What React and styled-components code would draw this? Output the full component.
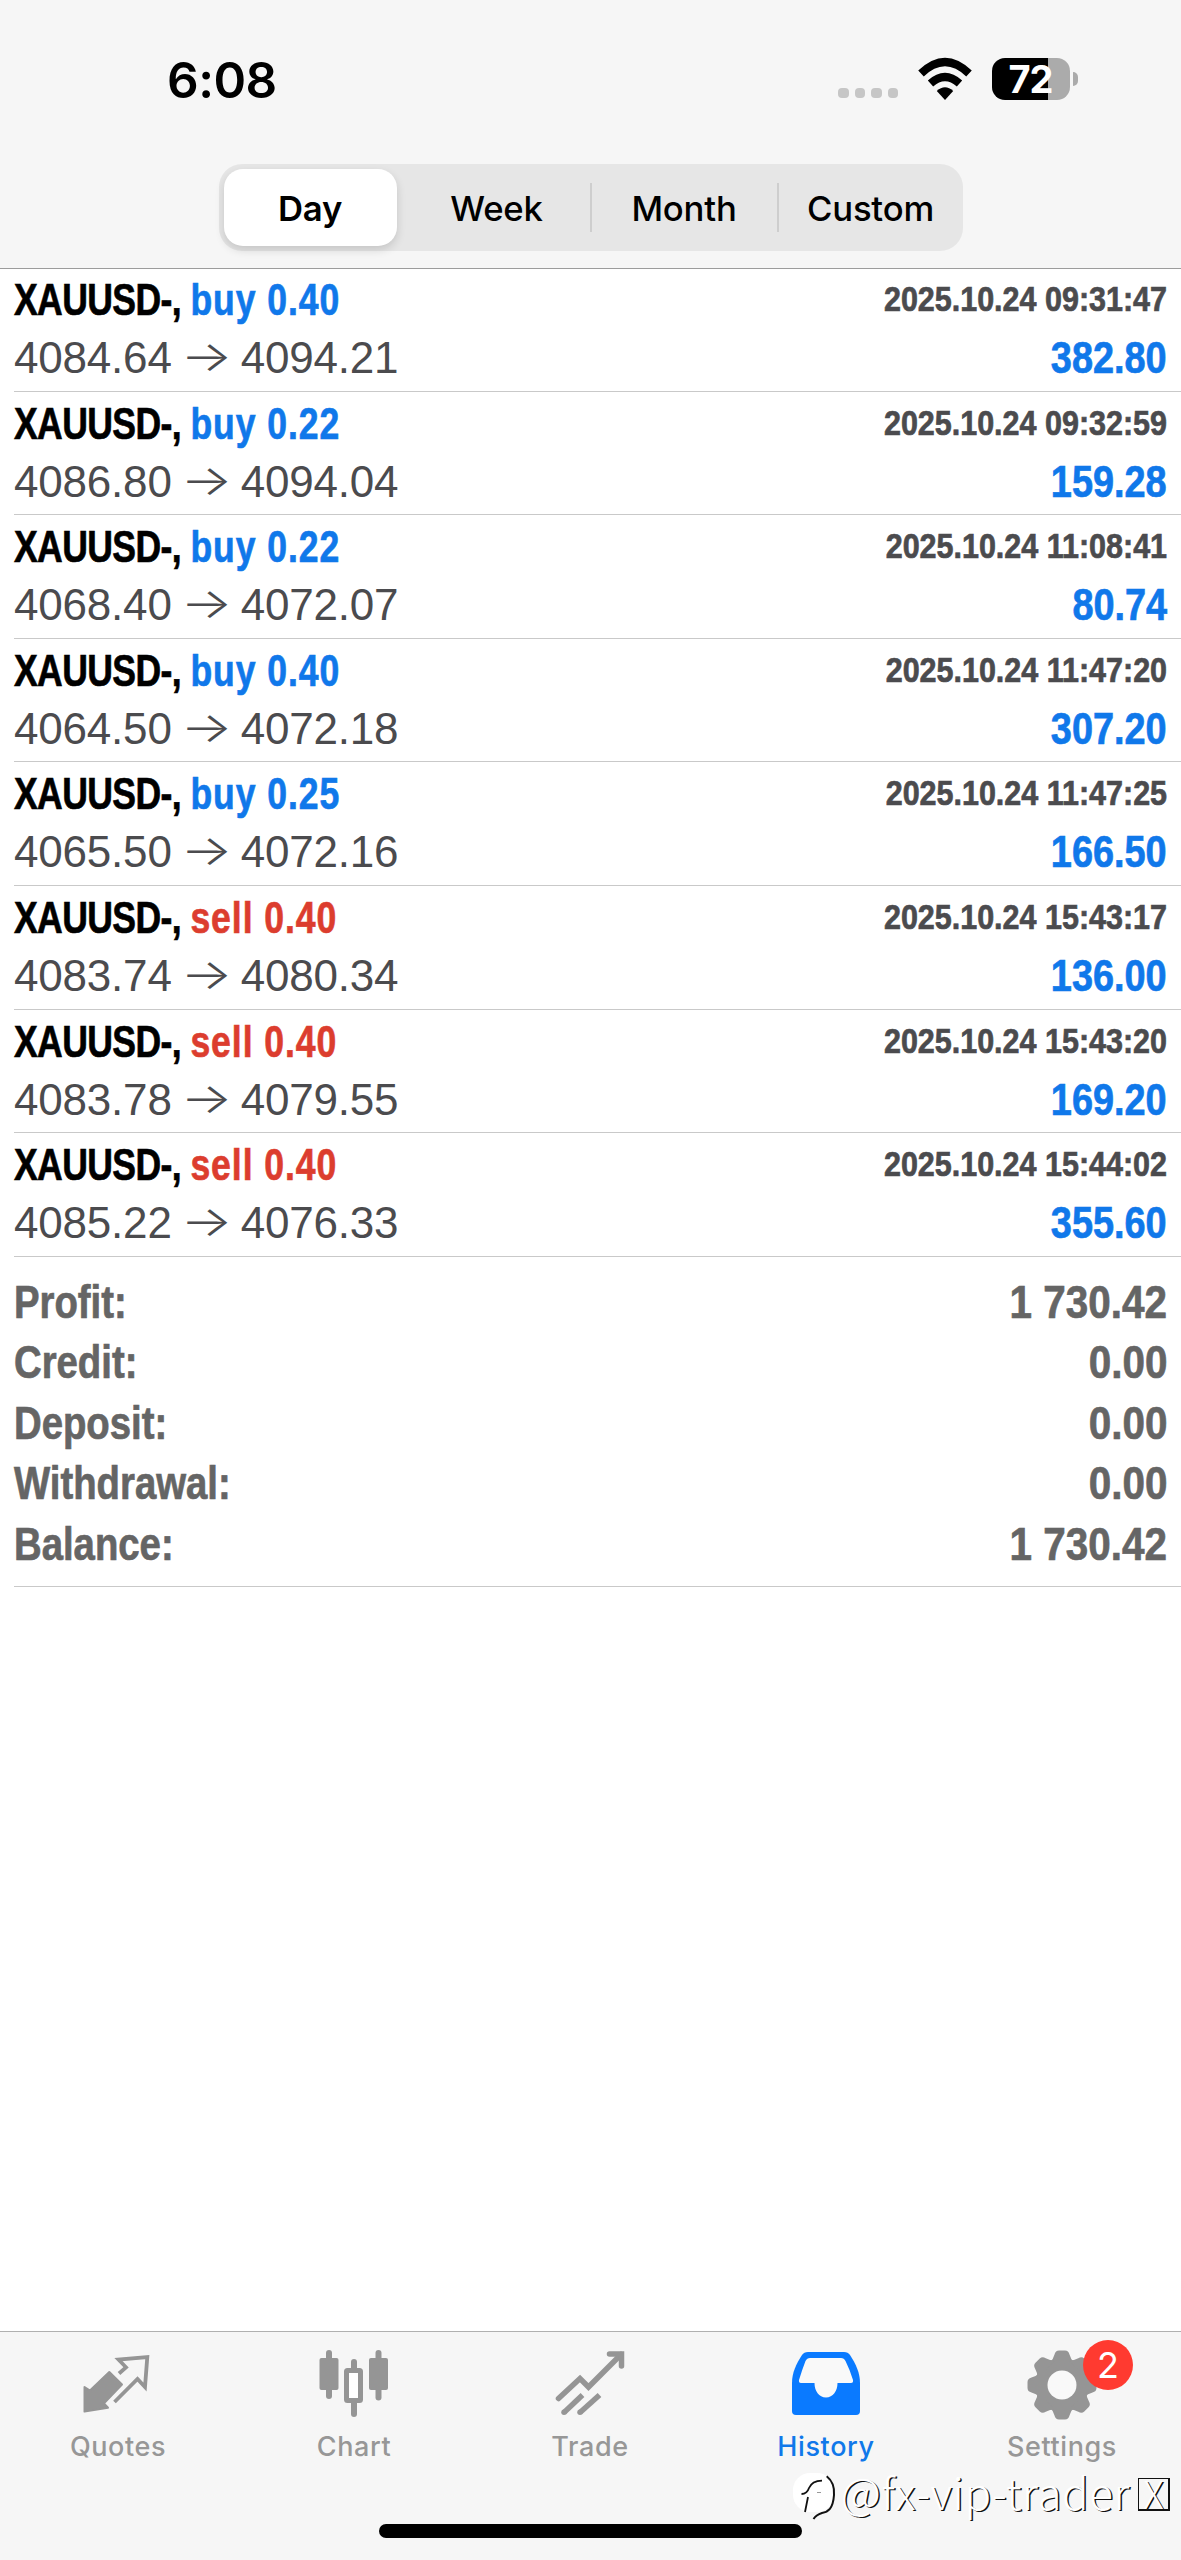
import React from "react";
import styled, { createGlobalStyle } from "styled-components";

const deals = [
  { id: 1, side: "buy", volume: "0.40", open: "4084.64", close: "4094.21", time: "2025.10.24 09:31:47", profit: "382.80" },
  { id: 2, side: "buy", volume: "0.22", open: "4086.80", close: "4094.04", time: "2025.10.24 09:32:59", profit: "159.28" },
  { id: 3, side: "buy", volume: "0.22", open: "4068.40", close: "4072.07", time: "2025.10.24 11:08:41", profit: "80.74" },
  { id: 4, side: "buy", volume: "0.40", open: "4064.50", close: "4072.18", time: "2025.10.24 11:47:20", profit: "307.20" },
  { id: 5, side: "buy", volume: "0.25", open: "4065.50", close: "4072.16", time: "2025.10.24 11:47:25", profit: "166.50" },
  { id: 6, side: "sell", volume: "0.40", open: "4083.74", close: "4080.34", time: "2025.10.24 15:43:17", profit: "136.00" },
  { id: 7, side: "sell", volume: "0.40", open: "4083.78", close: "4079.55", time: "2025.10.24 15:43:20", profit: "169.20" },
  { id: 8, side: "sell", volume: "0.40", open: "4085.22", close: "4076.33", time: "2025.10.24 15:44:02", profit: "355.60" },
];

const totals = [
  { label: "Profit:", value: "1 730.42" },
  { label: "Credit:", value: "0.00" },
  { label: "Deposit:", value: "0.00" },
  { label: "Withdrawal:", value: "0.00" },
  { label: "Balance:", value: "1 730.42" },
];

const QuotesIcon = () => (
  <svg width="70" height="70" viewBox="0 0 70 70">
    <path
      d="M1.500 37 L7 40.500 L26.300 22 L39 34.500 L21 53.300 L25 57.700 L1.500 61.500Z"
      fill="#959595"
      stroke="#959595"
      strokeWidth="2"
      strokeLinejoin="round"
    />
    <path
      d="M36 23.500 L43 17.300 L35.500 9.500 L64.300 7 L62 37 L54.500 29 L31.500 52"
      fill="none"
      stroke="#959595"
      strokeWidth="3.800"
    />
  </svg>
);

const ChartIcon = () => (
  <svg width="70" height="70" viewBox="0 0 70 70" fill="#959595">
    <rect x="7" y="0" width="6" height="49" rx="3" />
    <rect x="0.500" y="8" width="19" height="32" rx="2" />
    <rect x="56.500" y="0" width="6" height="50.500" rx="3" />
    <rect x="50" y="8" width="19" height="32" rx="2" />
    <rect x="32" y="9" width="6" height="15" rx="3" />
    <rect x="32" y="47" width="6" height="20" rx="3" />
    <rect x="27.500" y="20.500" width="14" height="30" rx="1" fill="#fff" stroke="#959595" strokeWidth="5" />
  </svg>
);

const TradeIcon = () => (
  <svg width="70" height="70" viewBox="0 0 70 70" fill="none" stroke="#959595" strokeWidth="5.500">
    <path d="M3.500 48.500 L25 28.500 L33.500 37 L66 4.500" strokeLinecap="round" />
    <path d="M54.500 4 H66.500 V16" strokeLinecap="round" />
    <path d="M9 62.500 L27.500 45" />
    <path d="M25 62.500 L44.500 45" />
    <circle cx="9" cy="62.300" r="2.750" fill="#959595" stroke="none" />
    <circle cx="25" cy="62.300" r="2.750" fill="#959595" stroke="none" />
  </svg>
);

const HistoryIcon = () => (
  <svg width="70" height="70" viewBox="0 0 70 70">
    <path
      d="M17 2 H53 Q57 2 59 5 C65 14 69 23 69 33 V61 Q69 65 65 65 H5 Q1 65 1 61 V33 C1 23 5 14 11 5 Q13 2 17 2Z"
      fill="#0a7aff"
    />
    <path
      d="M19 8 H50 Q53 8 54.500 11 Q59 20 62 30 Q62.500 33 60 33 H46.500 C46.500 41 42 47.500 35 47.500 C28 47.500 23.500 41 23.500 33 H10 Q7.500 33 8 30 Q11 20 14.500 11 Q16 8 19 8Z"
      fill="#f9f9f9"
    />
  </svg>
);

const SettingsIcon = () => (
  <svg width="70" height="70" viewBox="-35 -35 70 70" fill="#959595">
    <circle r="26.500" />
    {[0, 45, 90, 135, 180, 225, 270, 315].map((angle) => (
      <path
        key={angle}
        d="M-12.500 -22 Q-8.500 -26 -7.500 -30.500 Q-6.500 -34.500 -3 -34.500 H3 Q6.500 -34.500 7.500 -30.500 Q8.500 -26 12.500 -22Z"
        transform={`rotate(${angle})`}
      />
    ))}
    <circle r="14.500" fill="#f9f9f9" />
  </svg>
);

const tabs = [
  { name: "Quotes", icon: <QuotesIcon /> },
  { name: "Chart", icon: <ChartIcon /> },
  { name: "Trade", icon: <TradeIcon /> },
  { name: "History", icon: <HistoryIcon />, active: true },
  { name: "Settings", icon: <SettingsIcon />, badge: 2 },
];

function App() {
  return (
    <Screen>
      <GlobalStyle />
      <Header>
        <StatusBar>
          <Clock>6:08</Clock>
          <StatusIcons>
            <SignalDots>
              <span />
              <span />
              <span />
              <span />
            </SignalDots>
            <svg width="54" height="46" viewBox="0 0 54 46">
              <path d="M27 45 L18.800 36 Q27 28.500 35.200 36Z" />
              <path d="M12.500 28.500 Q27 15.500 41.500 28.500" fill="none" stroke="#000" strokeWidth="8" />
              <path d="M3 18.500 Q27 -4.500 51 18.500" fill="none" stroke="#000" strokeWidth="8" />
            </svg>
            <Battery>
              <BatteryLevel>72</BatteryLevel>
            </Battery>
            <BatteryTip />
          </StatusIcons>
        </StatusBar>
        <Segmented>
          <Segment $selected>Day</Segment>
          <Segment>Week</Segment>
          <Segment $divider>Month</Segment>
          <Segment $divider>Custom</Segment>
        </Segmented>
      </Header>

      <DealList>
        {deals.map((deal) => (
          <Deal key={deal.id}>
            <DealLine>
              <Symbol>
                XAUUSD-, <Side $side={deal.side}>{deal.side} {deal.volume}</Side>
              </Symbol>
              <Time>{deal.time}</Time>
            </DealLine>
            <DealLine>
              <Prices>
                {deal.open}
                <Arrow>→</Arrow>
                {deal.close}
              </Prices>
              <Profit>{deal.profit}</Profit>
            </DealLine>
          </Deal>
        ))}
      </DealList>

      <Totals>
        {totals.map((item) => (
          <TotalRow key={item.label}>
            <TotalLabel>{item.label}</TotalLabel>
            <TotalValue>{item.value}</TotalValue>
          </TotalRow>
        ))}
      </Totals>

      <TabBar>
        <Tabs>
          {tabs.map((tab) => (
            <Tab key={tab.name} $active={tab.active}>
              <TabIcon>
                {tab.icon}
                {tab.badge && <Badge>{tab.badge}</Badge>}
              </TabIcon>
              {tab.name}
            </Tab>
          ))}
        </Tabs>
        <HomeIndicator />
        <Watermark>
          <svg width="46" height="52" viewBox="0 0 46 52" fill="none">
            <rect x="0" y="5" width="41" height="39" rx="17" fill="#fff" />
            <path d="M12 44 L15 29 M8.500 26 Q14 26 16 20 Q19 13 29 12.700" stroke="#111" strokeWidth="1.800" />
            <path d="M24 24.500 H28" stroke="#999" strokeWidth="1" />
            <path d="M33.700 8.300 Q42 15 41 27 C40 41 35 44 29 45 Q23 47 20.500 51" stroke="#111" strokeWidth="2" />
          </svg>
          <Handle>@fx-vip-trader</Handle>
          <MissingGlyph>X</MissingGlyph>
        </Watermark>
      </TabBar>
    </Screen>
  );
}

export default App;

const GlobalStyle = createGlobalStyle`
  * {
    box-sizing: border-box;
  }
  body {
    margin: 0;
    background: #fff;
  }
`;

const Screen = styled.div`
  width: 1181px;
  height: 2560px;
  display: flex;
  flex-direction: column;
  background: #fff;
  font-family: Inter, sans-serif;
  overflow: hidden;
`;
const Header = styled.header`
  height: 269px;
  flex-shrink: 0;
  background: #f6f6f6;
  border-bottom: 1px solid #9c9c9c;
`;
const StatusBar = styled.div`
  height: 164px;
  padding: 55px 103px 0 167px;
  display: flex;
  justify-content: space-between;
  align-items: flex-start;
`;
const Clock = styled.div`
  font-size: 49.500px;
  line-height: 51px;
  font-weight: 600;
  letter-spacing: -0.500px;
`;
const StatusIcons = styled.div`
  display: flex;
  align-items: flex-start;
  height: 50px;
`;
const SignalDots = styled.div`
  display: flex;
  gap: 6px;
  margin: 33px 20px 0 0;

  span {
    width: 10.500px;
    height: 10px;
    border-radius: 4px;
    background: #c6c6c6;
  }
`;
const Battery = styled.div`
  width: 78px;
  height: 42px;
  margin: 3px 0 0 20px;
  border-radius: 13px;
  background: linear-gradient(to right, #000 56px, #ababab 56px);
`;
const BatteryLevel = styled.div`
  width: 77px;
  text-align: center;
  color: #fff;
  font-size: 38px;
  line-height: 42px;
  font-weight: 700;
  letter-spacing: -1px;
`;
const BatteryTip = styled.div`
  width: 5px;
  height: 14px;
  margin: 17px 0 0 3px;
  border-radius: 0 5px 5px 0;
  background: #ababab;
`;
const Segmented = styled.div`
  width: 744px;
  height: 87px;
  margin: 0 auto;
  padding: 5px 0 5px 5px;
  display: grid;
  grid-template-columns: 180px 186px 187px 186px;
  align-items: center;
  border-radius: 23px;
  background: #e6e6e6;
`;
const Segment = styled.div`
  height: ${(props) => (props.$selected ? "77px" : "49px")};
  margin-right: ${(props) => (props.$selected ? "7px" : "0")};
  line-height: ${(props) => (props.$selected ? "79px" : "51px")};
  text-align: center;
  font-size: 34.700px;
  font-weight: ${(props) => (props.$selected ? 600 : 500)};
  letter-spacing: -0.200px;
  border-radius: ${(props) => (props.$selected ? "19px" : "0")};
  background: ${(props) => (props.$selected ? "#fff" : "none")};
  box-shadow: ${(props) => (props.$selected ? "0 4px 10px rgba(0, 0, 0, 0.14)" : "none")};
  border-left: ${(props) => (props.$divider ? "2px solid #cecece" : "none")};
`;
const DealList = styled.div`
  margin-top: -0.900px;
  padding-left: 14px;
`;
const Deal = styled.div`
  height: 123.600px;
  padding: 3px 14px 0 0;
  border-bottom: 1.500px solid #c9c9c9;
`;
const DealLine = styled.div`
  height: 58px;
  display: flex;
  justify-content: space-between;
  align-items: center;
`;
/* bold sans squeezed horizontally into a condensed face */
const Condensed = styled.div`
  font-family: "Liberation Sans", sans-serif;
  font-weight: 700;
  white-space: pre;
  -webkit-text-stroke: 0.700px currentColor;
  transform: scaleX(${(props) => props.$squeeze});
  transform-origin: ${(props) => props.$origin || "left"} center;
`;
const Symbol = styled(Condensed).attrs({ $squeeze: 0.79 })`
  font-size: 45px;
  letter-spacing: -0.750px;
`;
const Side = styled.span`
  color: ${(props) => (props.$side === "buy" ? "#1078ea" : "#dc3d2e")};
  letter-spacing: 1.200px;
`;
const Time = styled(Condensed).attrs({ $squeeze: 0.871, $origin: "right" })`
  margin-top: -2px;
  font-size: 35px;
  color: #4b4b4e;
`;
const Prices = styled.div`
  display: flex;
  align-items: center;
  font-family: "Liberation Sans", sans-serif;
  font-size: 44px;
  letter-spacing: -0.200px;
  color: #4b4b4e;
`;
const Arrow = styled.span`
  width: 69px;
  margin-top: -4px;
  text-align: center;
  font-family: Inter, sans-serif;
  font-size: 42px;
  line-height: 50px;
  font-weight: 300;
  transform: scaleX(1.300);
`;
const Profit = styled(Condensed).attrs({ $squeeze: 0.86, $origin: "right" })`
  font-size: 44px;
  color: #1078ea;
`;
const Totals = styled.div`
  height: 330px;
  margin-left: 14px;
  padding: 14.500px 14px 0 0;
  border-bottom: 1px solid #c9c9c9;
`;
const TotalRow = styled.div`
  height: 60.400px;
  display: flex;
  justify-content: space-between;
  align-items: center;
  font-size: 47px;
  color: #656565;
`;
const TotalLabel = styled(Condensed).attrs({ $squeeze: 0.815 })``;
const TotalValue = styled(Condensed).attrs({ $squeeze: 0.86, $origin: "right" })``;
const TabBar = styled.nav`
  position: relative;
  height: 229px;
  margin-top: auto;
  background: #f6f6f6;
  border-top: 1px solid #b0b0b0;
`;
const Tabs = styled.div`
  width: 1180px;
  height: 192px;
  display: grid;
  grid-template-columns: repeat(5, 1fr);
`;
const Tab = styled.div`
  padding-top: 18px;
  display: flex;
  flex-direction: column;
  align-items: center;
  gap: 10px;
  font-size: 27px;
  line-height: 34px;
  font-weight: 500;
  letter-spacing: 0.600px;
  color: ${(props) => (props.$active ? "#1078ea" : "#979797")};
`;
const TabIcon = styled.div`
  position: relative;
  width: 70px;
  height: 70px;
`;
const Badge = styled.div`
  position: absolute;
  left: 56px;
  top: -10px;
  width: 50px;
  height: 50px;
  border-radius: 50%;
  background: #ff3a30;
  color: #fff;
  font-size: 36px;
  line-height: 50px;
  font-weight: 400;
  letter-spacing: 0;
  text-align: center;
`;
const HomeIndicator = styled.div`
  width: 423px;
  height: 14px;
  margin: 0 auto;
  border-radius: 7px;
  background: #000;
`;
const Watermark = styled.div`
  position: absolute;
  right: 11px;
  top: 136px;
  display: flex;
  align-items: center;
  color: #fff;
  font-family: "Noto Sans CJK SC", sans-serif;
  font-size: 44px;
  font-weight: 300;
  line-height: 50px;
  text-shadow: 1.500px 1px 0 #111;
`;
const Handle = styled.span`
  margin: -6px 8px 0 2px;
  letter-spacing: 0.600px;
`;
const MissingGlyph = styled.span`
  width: 32px;
  height: 33px;
  border: solid #111;
  border-width: 1px 2px 2px 1.500px;
  line-height: 28px;
  font-size: 38px;
  text-align: center;
`;
